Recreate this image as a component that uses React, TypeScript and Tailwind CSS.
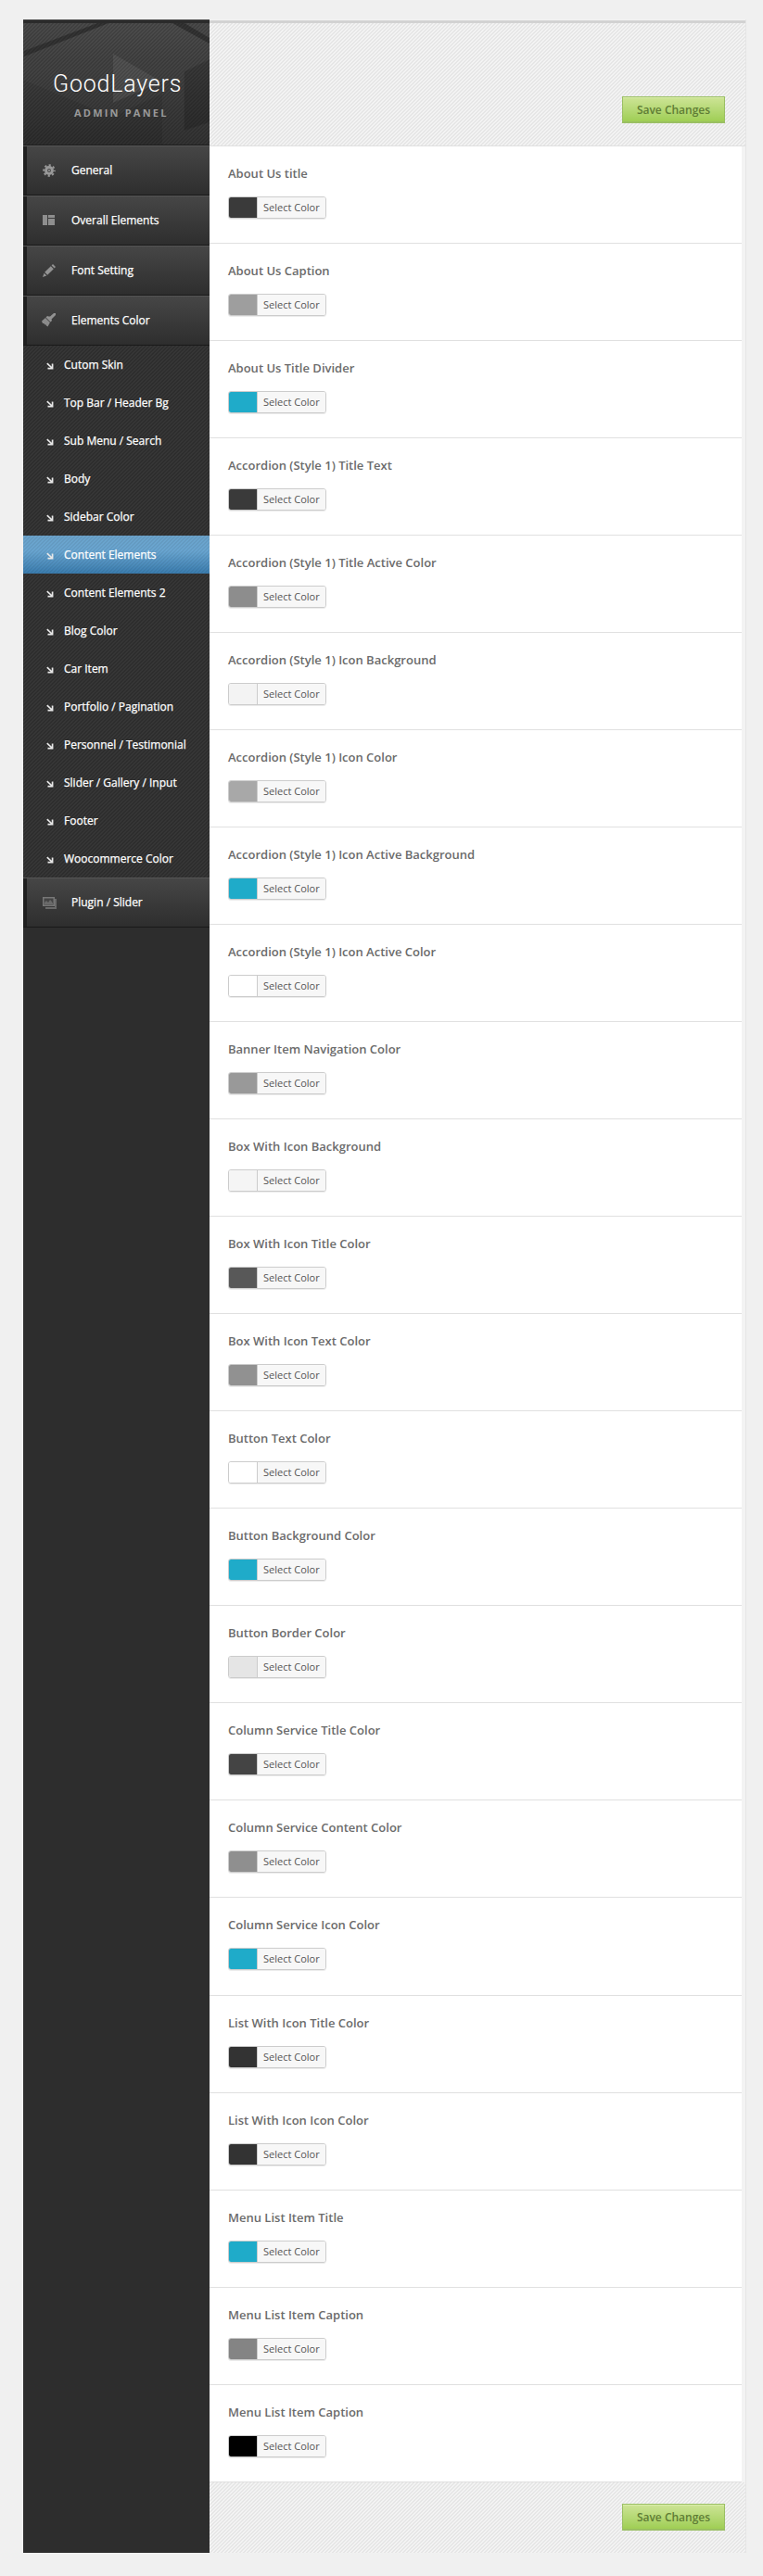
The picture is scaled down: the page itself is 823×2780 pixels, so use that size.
import type { ReactNode } from 'react'

interface ColorOption {
  label: string
  color: string
}

const options: ColorOption[] = [
  { label: 'About Us title', color: '#3a3a3a' },
  { label: 'About Us Caption', color: '#9e9e9e' },
  { label: 'About Us Title Divider', color: '#1fabc9' },
  { label: 'Accordion (Style 1) Title Text', color: '#3a3a3a' },
  { label: 'Accordion (Style 1) Title Active Color', color: '#8d8d8d' },
  { label: 'Accordion (Style 1) Icon Background', color: '#f3f3f3' },
  { label: 'Accordion (Style 1) Icon Color', color: '#a8a8a8' },
  { label: 'Accordion (Style 1) Icon Active Background', color: '#1fabc9' },
  { label: 'Accordion (Style 1) Icon Active Color', color: '#ffffff' },
  { label: 'Banner Item Navigation Color', color: '#999999' },
  { label: 'Box With Icon Background', color: '#f5f5f5' },
  { label: 'Box With Icon Title Color', color: '#585858' },
  { label: 'Box With Icon Text Color', color: '#919191' },
  { label: 'Button Text Color', color: '#ffffff' },
  { label: 'Button Background Color', color: '#1fabc9' },
  { label: 'Button Border Color', color: '#e5e5e5' },
  { label: 'Column Service Title Color', color: '#444444' },
  { label: 'Column Service Content Color', color: '#8f8f8f' },
  { label: 'Column Service Icon Color', color: '#1fabc9' },
  { label: 'List With Icon Title Color', color: '#333333' },
  { label: 'List With Icon Icon Color', color: '#333333' },
  { label: 'Menu List Item Title', color: '#1fabc9' },
  { label: 'Menu List Item Caption', color: '#848484' },
  { label: 'Menu List Item Caption', color: '#000000' },
]

const subMenu = [
  'Cutom Skin',
  'Top Bar / Header Bg',
  'Sub Menu / Search',
  'Body',
  'Sidebar Color',
  'Content Elements',
  'Content Elements 2',
  'Blog Color',
  'Car Item',
  'Portfolio / Pagination',
  'Personnel / Testimonial',
  'Slider / Gallery / Input',
  'Footer',
  'Woocommerce Color',
]

function GearIcon() {
  return (
    <svg width="16" height="16" viewBox="0 0 16 16" fill="none" stroke="#999">
      <circle cx="8" cy="8" r="3.4" strokeWidth="3" />
      <circle cx="8" cy="8" r="5.8" strokeWidth="2" strokeDasharray="2.2 2.355" strokeDashoffset="1.1" />
      <circle cx="8" cy="8" r="0.8" strokeWidth="1" />
    </svg>
  )
}

function LayoutIcon() {
  return (
    <svg width="16" height="16" viewBox="0 0 16 16" fill="#8e8e8e">
      <path d="M1 2h5v11H1zM7 2h7v3H7zM7 6h7v7H7z" />
    </svg>
  )
}

function PencilIcon() {
  return (
    <svg width="16" height="16" viewBox="0 0 16 16" fill="#929292">
      <path d="M3.2 9.8 9.8 3.2l3 3-6.6 6.6zM10.6 2.4 12 1l3 3-1.4 1.4zM2.6 10.7l2.7 2.7L1 15z" />
    </svg>
  )
}

function BrushIcon() {
  return (
    <svg width="16" height="16" viewBox="0 0 16 16" fill="#929292">
      <path d="M13 0h2v2l-4.500 4.500.5 1.500-1.500 1.500-5-5L6 3l1.500.5L9 3.500z" />
      <path d="m4 5 5 5-2.500 4.500-1.500-1-1-1.500-1 .500-.500-1.500L1 11 0 8.500z" fill="#8a8a8a" />
    </svg>
  )
}

function SliderIcon() {
  return (
    <svg width="17" height="16" viewBox="0 0 17 16">
      <path d="M14 4h2v11H4v-2h10z" fill="#696969" />
      <rect x="1.75" y="2.75" width="11.5" height="8.5" fill="#444" stroke="#777" strokeWidth="1.5" />
      <path d="M3 10V8l2-2 2 2 2-3 1.5 1.500L12 9v1z" fill="#6a6a6a" />
    </svg>
  )
}

function ArrowIcon() {
  return (
    <svg width="8" height="8" viewBox="0 0 8 8" fill="none" stroke="#e8e8e8" strokeWidth="1.7">
      <path d="M.8 1.2 6 6M6.600 1.500v5.200H1.500" />
    </svg>
  )
}

function MenuItem({ icon, label }: { icon: ReactNode; label: string }) {
  return (
    <div className="flex h-[54px] items-center border-b border-[#191919] border-t border-t-[#555] bg-linear-to-b from-[#464646] to-[#2e2e2e]">
      <div className="h-full w-1 bg-[#202020]" />
      <div className="ml-4 w-[32px]">{icon}</div>
      <span className="text-[12px] text-white [-webkit-text-stroke:0.25px_#fff]">{label}</span>
    </div>
  )
}

function SaveButton() {
  return (
    <button className="h-[29px] w-[111px] border border-b-2 border-[#9abf62] bg-linear-to-b from-[#cde495] to-[#9fce54] pt-[2px] text-[12px] font-semibold text-[#5f7d35] shadow-[inset_0_1px_0_#d9ecab]">
      Save Changes
    </button>
  )
}

function OptionRow({ label, color }: ColorOption) {
  return (
    <div className="h-[105px] border-b border-[#e0e0e0] pl-5 pt-[20px] nth-[19]:h-[106px] nth-[19]:pb-px">
      <h3 className="text-[13px] font-semibold leading-[18px] text-[#6b6b6b]">{label}</h3>
      <div className="mt-[16px] flex h-[24px] w-[106px] overflow-hidden rounded-[3px] border border-[#ccc] shadow-[0_1px_0_rgba(0,0,0,0.08)]">
        <div className="w-[30px]" style={{ backgroundColor: color }} />
        <div className="flex-1 border-l border-[#ccc] bg-[#f7f7f7] pl-[6px] text-[11px] leading-[22px] text-[#555]">
          Select Color
        </div>
      </div>
    </div>
  )
}

export default function App() {
  return (
    <div className="h-[2780px] w-[823px] bg-[#f0f0f0] pl-[25px] pt-[21px] font-['Open_Sans',sans-serif]">
      <div className="flex h-[2734px] w-[780px]">
        <aside className="w-[201px] shrink-0 bg-[#2d2d2d]">
          <div className="relative h-[136px] overflow-hidden border-b border-[#1f1f1f] bg-linear-to-b from-[#4b4b4b] to-[#303030]">
            {/* faded logo behind the title */}
            <svg className="absolute inset-0" width="201" height="136" viewBox="0 0 201 136">
              <path d="M0 33 90 4h72l39 22v18l-28 13v62l28-9v26H0z" fill="#fff" fillOpacity=".015" />
              <path d="M1 34 80 4h12L1 40zM161 4l40 22v-6L174 4z" fill="#333" />
              <path d="M0 65 96 105 150 80V136H0z" fill="#000" fillOpacity=".08" />
              <path d="m97 37 52 30-52 23z" fill="#fff" fillOpacity=".08" />
              <path d="m174 56 27-13v68l-27 9z" fill="#000" fillOpacity=".12" />
            </svg>
            <div className="absolute inset-0 bg-[repeating-linear-gradient(135deg,rgba(0,0,0,0.14)_0_1px,transparent_1px_2.828px)]" />
            <div className="absolute inset-x-0 top-0 h-1 border-t border-[#444] bg-[#2b2b2b]" />
            <div className="relative pt-[52px]">
              <div className="pl-[32px] font-['Roboto'] text-[25px] font-light leading-[36px] tracking-[0.8px] text-white">
                GoodLayers
              </div>
              <div className="mt-[5px] pl-[55px] text-[11px] font-bold leading-[16px] tracking-[2.2px] text-[#999]">
                ADMIN PANEL
              </div>
            </div>
          </div>
          <MenuItem icon={<GearIcon />} label="General" />
          <MenuItem icon={<LayoutIcon />} label="Overall Elements" />
          <MenuItem icon={<PencilIcon />} label="Font Setting" />
          <MenuItem icon={<BrushIcon />} label="Elements Color" />
          <nav className="bg-[#363636] bg-[repeating-linear-gradient(135deg,rgba(0,0,0,0.16)_0_1px,transparent_1px_2.828px)]">
            {subMenu.map((item) => (
              <div
                key={item}
                className={`flex h-[41px] items-center pl-[25px] ${
                  item === 'Content Elements'
                    ? 'bg-[repeating-linear-gradient(135deg,rgba(0,0,0,0.06)_0_1px,transparent_1px_2.828px),linear-gradient(#6ba3cb,#69a5d0_40%,#3a7cae)]'
                    : ''
                }`}
              >
                <div className="w-[19px] pt-[2px]">
                  <ArrowIcon />
                </div>
                <span className="text-[12px] text-white [-webkit-text-stroke:0.25px_#fff]">{item}</span>
              </div>
            ))}
          </nav>
          <MenuItem icon={<SliderIcon />} label="Plugin / Slider" />
        </aside>

        <main className="w-[579px] border-r border-[#e5e5e5] bg-[#f3f3f3]">
          <div className="mt-px flex h-[136px] justify-end border-b border-t-3 border-b-[#e0e0e0] border-t-[#d2d2d2] bg-[#f3f3f3] bg-[repeating-linear-gradient(135deg,#e6e6e6_0_1px,transparent_1px_2.828px)] pr-[22px] pt-[79px]">
            <SaveButton />
          </div>
          <div className="mr-1 bg-white">
            {options.map((option, i) => (
              <OptionRow key={i} {...option} />
            ))}
          </div>
          <div className="flex h-[76px] justify-end bg-[#f3f3f3] bg-[repeating-linear-gradient(135deg,#e6e6e6_0_1px,transparent_1px_2.828px)] pr-[22px] pt-[23px]">
            <SaveButton />
          </div>
        </main>
      </div>
    </div>
  )
}
